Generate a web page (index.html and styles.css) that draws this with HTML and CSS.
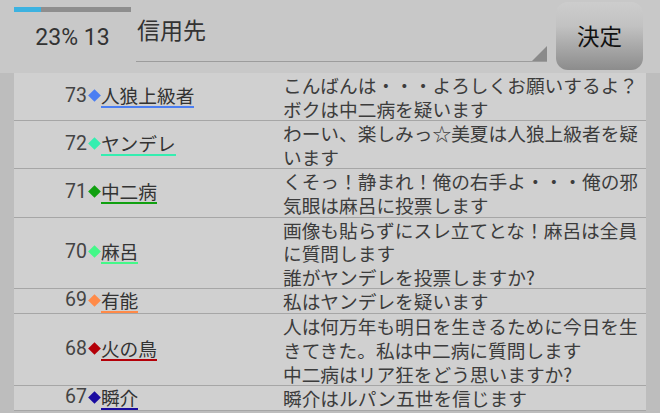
FILE: index.html
```html
<!DOCTYPE html>
<html lang="ja">
<head>
<meta charset="utf-8">
<link rel="stylesheet" href="styles.css">
</head>
<body>
<header class="top">
  <div class="stat">
    <div class="progress"><div class="fill" style="width:23%"></div></div>
    <div class="stat-text">23% 13</div>
  </div>
  <div class="spinner">
    <span class="spinner-text">信用先</span>
    <span class="caret"></span>
  </div>
  <button class="decide">決定</button>
</header>
<main class="list">
  <div class="row">
    <div class="who"><span class="num">73</span><span class="dia c-blue"></span><span class="name u-blue">人狼上級者</span></div>
    <div class="msg">こんばんは・・・よろしくお願いするよ？ボクは中二病を疑います</div>
  </div>
  <div class="row">
    <div class="who"><span class="num">72</span><span class="dia c-teal"></span><span class="name u-teal">ヤンデレ</span></div>
    <div class="msg">わーい、楽しみっ☆美夏は人狼上級者を疑います</div>
  </div>
  <div class="row">
    <div class="who"><span class="num">71</span><span class="dia c-green"></span><span class="name u-green">中二病</span></div>
    <div class="msg">くそっ！静まれ！俺の右手よ・・・俺の邪気眼は麻呂に投票します</div>
  </div>
  <div class="row">
    <div class="who"><span class="num">70</span><span class="dia c-lime"></span><span class="name u-lime">麻呂</span></div>
    <div class="msg">画像も貼らずにスレ立てとな！麻呂は全員に質問します<br>誰がヤンデレを投票しますか?</div>
  </div>
  <div class="row">
    <div class="who"><span class="num">69</span><span class="dia c-orange"></span><span class="name u-orange">有能</span></div>
    <div class="msg">私はヤンデレを疑います</div>
  </div>
  <div class="row">
    <div class="who"><span class="num">68</span><span class="dia c-red"></span><span class="name u-red">火の鳥</span></div>
    <div class="msg">人は何万年も明日を生きるために今日を生きてきた。私は中二病に質問します<br>中二病はリア狂をどう思いますか?</div>
  </div>
  <div class="row">
    <div class="who"><span class="num">67</span><span class="dia c-navy"></span><span class="name u-navy">瞬介</span></div>
    <div class="msg">瞬介はルパン五世を信じます</div>
  </div>
</main>
</body>
</html>
```
FILE: styles.css
```css
html, body {
  margin: 0;
  padding: 0;
}
body {
  width: 660px;
  height: 413px;
  overflow: hidden;
  background: #bdbdbd;
  font-family: "Roboto", "Noto Sans CJK JP", sans-serif;
  color: #3a3a3a;
}
.top {
  height: 73px;
  background: #c8c8c8;
  display: flex;
  align-items: flex-start;
}
.stat {
  margin-left: 14px;
  width: 117px;
}
.progress {
  margin-top: 7px;
  height: 5px;
  background: #8e8e8e;
}
.fill {
  height: 100%;
  background: #3cb2e0;
}
.stat-text {
  margin-top: 11px;
  text-align: center;
  font-size: 23px;
  line-height: 30px;
  color: #333;
}
.spinner {
  margin-left: 5px;
  width: 411px;
  height: 61px;
  border-bottom: 1px solid #9c9c9c;
  display: flex;
  justify-content: space-between;
}
.spinner-text {
  padding-left: 1px;
  padding-top: 16px;
  font-size: 23px;
  line-height: 32px;
  color: #333;
}
.caret {
  align-self: flex-end;
  width: 0;
  height: 0;
  border-left: 15px solid transparent;
  border-bottom: 15px solid #8a8a8a;
}
.decide {
  margin: 2px 0 0 9px;
  width: 87px;
  height: 68px;
  border: none;
  border-radius: 12px;
  background: linear-gradient(to bottom, #cdcdcd 0%, #c2c2c2 35%, #8c8c8c 100%);
  font-family: "Noto Sans CJK JP", sans-serif;
  font-size: 22.5px;
  color: #111;
  padding: 0 0 3px 0;
}
.list {
  margin: 0 14px;
  background: #d0d0d0;
}
.row {
  display: grid;
  grid-template-columns: 269px 1fr;
  border-bottom: 1px solid #a6a6a6;
}
.who {
  display: flex;
  align-items: center;
  padding-left: 51px;
}
.num {
  font-size: 19.5px;
  line-height: 22px;
  margin-bottom: 2px;
  color: #444;
}
.dia {
  width: 13px;
  height: 13px;
  display: flex;
  align-items: center;
  justify-content: center;
  margin-left: 1px;
  margin-bottom: 2px;
}
.dia::before {
  content: "";
  width: 9px;
  height: 9px;
  transform: rotate(45deg);
  background: currentColor;
}
.name {
  font-family: "Noto Sans CJK JP", sans-serif;
  font-size: 18.7px;
  line-height: 20px;
  padding-bottom: 1px;
  color: #333;
  border-bottom: 2px solid currentColor;
}
.msg {
  font-family: "Noto Sans CJK JP", sans-serif;
  font-size: 18.7px;
  line-height: 23.6px;
  color: #3c3c3c;
  padding-right: 2px;
}
.c-blue { color: #4b7ef2; }
.c-teal { color: #34eeb0; }
.c-green { color: #10a010; }
.c-lime { color: #44f888; }
.c-orange { color: #ff8a48; }
.c-red { color: #b40008; }
.c-navy { color: #1a0ca0; }
.u-blue { border-bottom-color: #4b7ef2; }
.u-teal { border-bottom-color: #34eeb0; }
.u-green { border-bottom-color: #10a010; }
.u-lime { border-bottom-color: #44f888; }
.u-orange { border-bottom-color: #ff8a48; }
.u-red { border-bottom-color: #b40008; }
.u-navy { border-bottom-color: #1a0ca0; }
```
